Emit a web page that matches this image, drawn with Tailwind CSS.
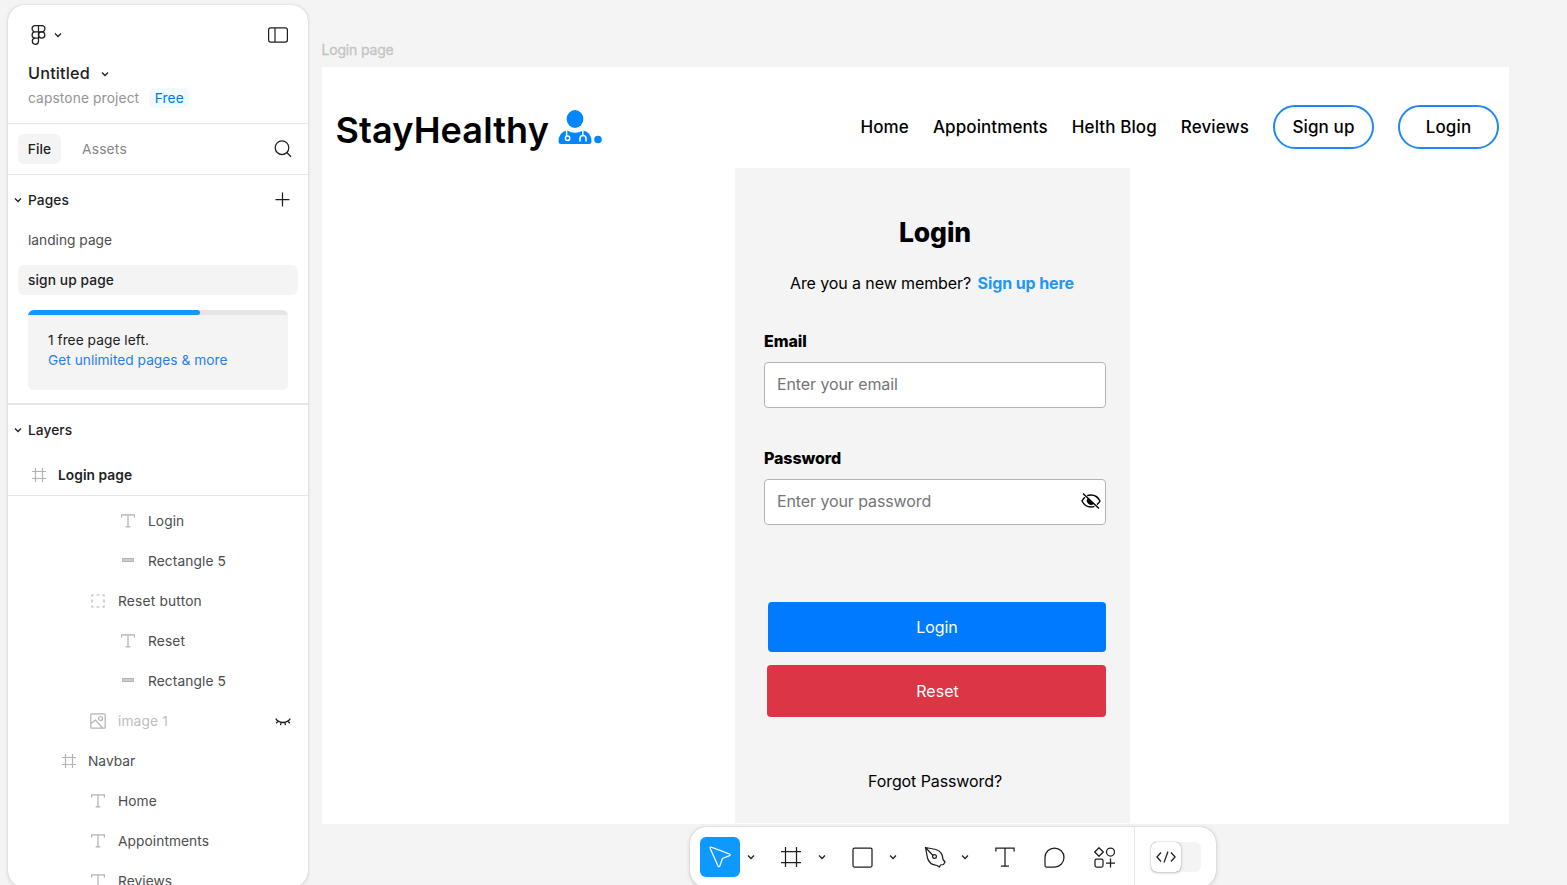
<!DOCTYPE html>
<html lang="en">
<head>
<meta charset="utf-8">
<title>Untitled</title>
<script src="https://cdn.jsdelivr.net/npm/@tailwindcss/browser@4"></script>
</head>
<body class="relative h-[885px] w-[1567px] overflow-hidden bg-[#f4f4f4] font-['Inter',sans-serif] text-[#1e1e1e]">
<svg class="hidden">
  <defs>
    <symbol id="chev" viewBox="0 0 10 10"><path d="M2 3.5 5 6.5 8 3.5" fill="none" stroke="currentColor" stroke-width="1.25"/></symbol>
    <symbol id="hash" viewBox="0 0 14 14"><path d="M3.5 0v14M10.5 0v14M0 3.5h14M0 10.5h14" fill="none" stroke="currentColor" stroke-width="1.2"/></symbol>
    <symbol id="tee" viewBox="0 0 14 14"><path d="M.6 3.4V.9h12.8v2.5M7 .9v12M4.6 12.9h4.8" fill="none" stroke="currentColor" stroke-width="1.2"/></symbol>
  </defs>
</svg>

<!-- Canvas -->
<p class="absolute left-[321.5px] top-[40px] text-[14px] leading-5 tracking-[-0.18px] text-[#c3c3c3] [-webkit-text-stroke:0.3px_#c3c3c3]">Login page</p>
<main class="absolute left-[321.5px] top-[67px] h-[757px] w-[1187.5px] bg-white">
  <header class="flex h-[101px] pl-[14px]">
    <div class="flex pt-[36px]">
      <span class="mt-[4px] w-[215px] whitespace-nowrap text-[36px] font-semibold leading-[46px] tracking-[0.12px] text-black">StayHealthy</span>
      <svg class="mt-[7px] ml-[7.5px] h-[36px] w-[45px]" viewBox="0 0 45 36" fill="#0087ff">
        <ellipse cx="17" cy="9" rx="8.4" ry="9"/>
        <path d="M9 20.5Q17 25 25 20.5 33.5 22 33.5 32 33.5 34 31 34H3Q.5 34 .5 32 .5 22 9 20.5Z"/>
        <circle cx="40" cy="29.5" r="3.8"/>
        <g fill="none" stroke="#fff" stroke-width="1.5"><path d="M8.6 20v6"/><circle cx="9.6" cy="28.3" r="2.2"/><path d="M24.8 20v5M22 31.5v-3q0-3 3-3t3 3v3"/></g>
      </svg>
    </div>
    <nav class="ml-auto mr-[10px] mt-[37.5px] flex h-11 items-center text-[17px] font-medium tracking-[0.1px] text-black">
      <div class="flex gap-6 pt-[2px]"><span>Home</span><span>Appointments</span><span>Helth Blog</span><span>Reviews</span></div>
      <span class="ml-6 flex h-11 w-[101px] items-center justify-center rounded-full border-2 border-[#1e88f7] pt-[2px]">Sign up</span>
      <span class="ml-6 flex h-11 w-[101px] items-center justify-center rounded-full border-2 border-[#1e88f7] pt-[2px]">Login</span>
    </nav>
  </header>
  <section class="ml-[413.5px] flex h-[655px] w-[395px] flex-col bg-[#f4f4f4] pl-[29px] pr-[24px] text-[16px] tracking-[-0.1px] text-black">
    <h1 class="mt-[48px] text-center text-[26.5px] font-extrabold leading-8">Login</h1>
    <p class="mt-[23px] flex pl-[26px] leading-6"><span>Are you a new member?</span><a class="ml-[6.5px] font-bold text-[#1e97fb]">Sign up here</a></p>
    <label class="mt-[34px] font-extrabold leading-6">Email</label>
    <div class="mt-[9px] flex h-[46px] items-center rounded-[4px] border border-[#b3b3b3] bg-white pb-[2px] pl-3 text-[#757575]">Enter your email</div>
    <label class="mt-[38px] font-extrabold leading-6">Password</label>
    <div class="mt-[9px] flex h-[46px] items-center rounded-[4px] border border-[#b3b3b3] bg-white pl-3 pr-1 text-[#757575]"><span class="pb-[2px]">Enter your password</span>
      <svg class="mb-[2px] ml-auto h-5 w-5" viewBox="0 0 20 20" fill="none" stroke="#000" stroke-width="1.4"><path d="M6.2 4.6Q8 4 10 4q6 0 9 6-1 2-3 3.6M13.4 15.4Q12 16 10 16 4 16 1 10q1-2.2 3-3.8M2 2.5 18 17.5"/><path d="M7 7a4 4 0 1 0 6 5.5Z" fill="#000" stroke="none"/></svg>
    </div>
    <div class="ml-[4px] mt-[77px] flex h-[50px] items-center justify-center rounded-[4px] bg-[#007bff] text-white">Login</div>
    <div class="ml-[3px] mt-[13px] flex h-[52px] items-center justify-center rounded-[4px] bg-[#dc3545] pl-[2px] tracking-normal text-white">Reset</div>
    <p class="mt-[52px] text-center leading-6">Forgot Password?</p>
  </section>
</main>

<!-- Left panel -->
<aside class="absolute left-2 top-[5px] flex h-[882px] w-[300px] flex-col overflow-hidden rounded-[16px] bg-white text-[13.75px] leading-5 tracking-[0.06px] shadow-[0_0_1px_rgba(0,0,0,.25),0_1px_4px_rgba(0,0,0,.12)] *:shrink-0">
  <div class="h-[119px] border-b border-[#e6e6e6] px-5">
    <div class="mt-[15px] flex h-[30px] items-center">
      <svg class="ml-[3px] h-5 w-[15px]" viewBox="0 0 15 20" fill="none" stroke="currentColor" stroke-width="1.25"><path d="M7.5.7h-3.3a3.05 3.05 0 0 0 0 6.2h3.3zM7.5.7h3.3a3.05 3.05 0 0 1 0 6.2h-3.3M7.5 6.9h-3.3a3.05 3.05 0 0 0 0 6.2h3.3zM7.5 13.1h-3.3a3.1 3.1 0 1 0 3.3 3.1z"/><circle cx="10.7" cy="10" r="3.1"/></svg>
      <svg class="ml-[7px] h-[10px] w-[10px]"><use href="#chev"/></svg>
      <svg class="ml-auto h-4 w-5" viewBox="0 0 20 16" fill="none" stroke="currentColor" stroke-width="1.2"><rect x=".6" y=".9" width="18.8" height="14.2" rx="2"/><path d="M7 1v14"/></svg>
    </div>
    <div class="mt-[13px] flex h-[20px] items-center text-[16.25px] font-medium tracking-[0.17px]"><span>Untitled</span><svg class="ml-[10px] mt-[2px] h-[10px] w-[10px]"><use href="#chev"/></svg></div>
    <div class="mt-[5px] flex items-center text-[#949494]"><span class="tracking-[0.12px]">capstone project</span><span class="ml-[10px] flex h-5 w-10 items-center justify-center rounded-[5px] bg-[#f2f9ff] text-[#007be5]">Free</span></div>
  </div>
  <div class="flex h-[51px] items-center border-b border-[#e6e6e6] px-[10px]">
    <span class="flex h-[30px] w-[43px] items-center justify-center rounded-[6px] bg-[#f4f4f4] font-medium tracking-[0.15px]">File</span>
    <span class="ml-[21px] tracking-[0.2px] text-[#848484]">Assets</span>
    <svg class="mb-px ml-auto mr-[6.5px] h-[18px] w-[18px]" viewBox="0 0 18 18" fill="none" stroke="currentColor" stroke-width="1.25"><circle cx="8" cy="7.7" r="6.8"/><path d="M12.8 12.5 17 16.7"/></svg>
  </div>
  <div class="mt-[5px] flex h-10 items-center pl-[5px] pr-[18px] font-medium"><svg class="h-[10px] w-[10px]"><use href="#chev"/></svg><span class="ml-[5px]">Pages</span>
    <svg class="mb-px ml-auto h-[15px] w-[15px]" viewBox="0 0 15 15" stroke="currentColor" stroke-width="1.25"><path d="M7.5.5v14M.5 7.5h14"/></svg></div>
  <div class="flex h-10 items-center pl-5 tracking-normal text-[#4c4c4c]">landing page</div>
  <div class="mx-[10px] mt-[5px] flex h-[30px] items-center rounded-[6px] bg-[#f4f4f4] pl-[10px] font-medium tracking-[0.1px]">sign up page</div>
  <div class="mx-5 mt-[15px] h-20 overflow-hidden rounded-[6px] bg-[#f4f4f4] tracking-[0.03px]">
    <div class="h-[5px] bg-[#e5e5e5]"><div class="h-[5px] w-[172px] rounded-r-[3px] bg-[#0d99ff]"></div></div>
    <p class="mt-[15px] pl-5">1 free page left.</p>
    <p class="pl-5 tracking-normal text-[#2b7de9]">Get unlimited pages &amp; more</p>
  </div>
  <div class="mt-[13px] h-[2px] bg-[#e6e6e6]"></div>
  <div class="mt-[5px] flex h-10 items-center pl-[5px] font-medium"><svg class="h-[10px] w-[10px]"><use href="#chev"/></svg><span class="ml-[5px]">Layers</span></div>
  <div class="flex h-[46px] items-center border-b border-[#e6e6e6] pl-[23.5px] pt-[5px] font-semibold"><svg class="h-[14px] w-[14px] text-[#b3b3b3]"><use href="#hash"/></svg><span class="ml-[12.5px]">Login page</span></div>
  <div class="mt-[5px] flex flex-col text-[#4c4c4c] *:flex *:h-10 *:shrink-0 *:items-center [&_svg]:text-[#b3b3b3]">
    <div class="pl-[113px]"><svg class="mb-px h-[14px] w-[14px]"><use href="#tee"/></svg><span class="ml-[13px]">Login</span></div>
    <div class="pl-[114px]"><svg class="mb-[2px] h-1 w-3" viewBox="0 0 12 4"><rect x=".5" y=".5" width="11" height="3" fill="#ccc" stroke="currentColor"/></svg><span class="ml-[14px] tracking-[0.1px]">Rectangle 5</span></div>
    <div class="pl-[83px]"><svg class="mb-px h-[14px] w-[14px]" viewBox="0 0 14 14" fill="none" stroke="currentColor" stroke-width="1.2"><path d="M1 2.5V1h1.5M5.5 1h3M11.5 1H13v1.5M13 5.5v3M13 11.5V13h-1.5M8.5 13h-3M2.5 13H1v-1.5M1 8.5v-3"/></svg><span class="ml-[13px] tracking-[0.18px]">Reset button</span></div>
    <div class="pl-[113px]"><svg class="mb-px h-[14px] w-[14px]"><use href="#tee"/></svg><span class="ml-[13px] tracking-[0.15px]">Reset</span></div>
    <div class="pl-[114px]"><svg class="mb-[2px] h-1 w-3" viewBox="0 0 12 4"><rect x=".5" y=".5" width="11" height="3" fill="#ccc" stroke="currentColor"/></svg><span class="ml-[14px] tracking-[0.1px]">Rectangle 5</span></div>
    <div class="pl-[82px]"><svg class="h-4 w-4" viewBox="0 0 16 16" fill="none" stroke="currentColor" stroke-width="1.2"><rect x=".8" y=".8" width="14.4" height="14.4" rx="1"/><circle cx="10.5" cy="5.5" r="2"/><path d="M1 10.5 5.5 7l7 8"/></svg><span class="ml-[12px] tracking-[0.12px] text-[#bdbdbd]">image 1</span>
      <svg class="ml-auto mr-[17px] mt-px h-[8px] w-4" viewBox="0 0 16 8" fill="none" stroke="#1e1e1e" stroke-width="1.3"><path d="M.7.7Q3 4.5 8 4.5T15.3.7M3 3.2 1.2 5.2M6.2 4.4 5.500 7.2M9.8 4.4l.7 2.8M13 3.2l1.8 2"/></svg></div>
    <div class="pl-[53.5px]"><svg class="mb-px h-[14px] w-[14px]"><use href="#hash"/></svg><span class="ml-[12.5px] tracking-normal">Navbar</span></div>
    <div class="pl-[83px]"><svg class="mb-px h-[14px] w-[14px]"><use href="#tee"/></svg><span class="ml-[13px]">Home</span></div>
    <div class="pl-[83px]"><svg class="mb-px h-[14px] w-[14px]"><use href="#tee"/></svg><span class="ml-[13px]">Appointments</span></div>
    <div class="pl-[83px]"><svg class="mb-px h-[14px] w-[14px]"><use href="#tee"/></svg><span class="ml-[13px]">Reviews</span></div>
  </div>
</aside>

<!-- Toolbar -->
<footer class="absolute left-[690px] top-[827px] flex h-[60px] w-[526px] items-center rounded-[16px] bg-white pl-[10px] shadow-[0_0_1px_rgba(0,0,0,.3),0_1px_5px_rgba(0,0,0,.15)]">
  <span class="flex h-10 w-10 items-center justify-center rounded-[6px] bg-[#0d99ff]"><svg class="h-[22px] w-[22px]" viewBox="0 0 22 22" fill="none" stroke="#fff" stroke-width="1.3" stroke-linejoin="round"><path d="M1.200 2.500Q.7.800 2.300 1.200L20.500 8q1.300.8 0 1.700L13.500 12.500 10.800 20q-.8 1.600-1.800 0Z"/></svg></span>
  <svg class="ml-[5.5px] h-[10px] w-[10px]"><use href="#chev"/></svg>
  <svg class="ml-[25.5px] h-5 w-5" viewBox="0 0 20 20" stroke="currentColor" stroke-width="1.25"><path d="M4.5 0v20M15.5 0v20M0 4.5h20M0 15.5h20"/></svg>
  <svg class="ml-[15.5px] h-[10px] w-[10px]"><use href="#chev"/></svg>
  <svg class="ml-[25px] h-[21px] w-[21px]" viewBox="0 0 21 21" fill="none" stroke="currentColor" stroke-width="1.25"><rect x="1" y="1" width="19" height="19" rx="1.5"/></svg>
  <svg class="ml-[15.5px] h-[10px] w-[10px]"><use href="#chev"/></svg>
  <svg class="ml-[25.5px] h-[22px] w-[22px]" viewBox="0 0 22 22" fill="none" stroke="currentColor" stroke-width="1.25" stroke-linejoin="round"><path d="M1.5 1.5 12 3.5q6.500 2 7 10l2 2.500-1.500 2.500-3 .500-1 2-2.500-1.500Q5 18.500 3.500 12ZM1.500 1.500l7.500 8"/><circle cx="10.500" cy="10.500" r="1.900"/></svg>
  <svg class="ml-[14px] h-[10px] w-[10px]"><use href="#chev"/></svg>
  <svg class="ml-[25px] h-5 w-5" viewBox="0 0 20 20" fill="none" stroke="currentColor" stroke-width="1.25"><path d="M.9 4.5V1h18.200v3.500M10 1v18M6 19h8"/></svg>
  <svg class="ml-[29.5px] h-[21px] w-[21px]" viewBox="0 0 21 21" fill="none" stroke="currentColor" stroke-width="1.25"><path d="M10.5 1a9.500 9.500 0 1 1 0 19H2.500Q1 20 1 18.500v-8A9.500 9.500 0 0 1 10.500 1Z"/></svg>
  <svg class="ml-[29px] h-[21px] w-[21px]" viewBox="0 0 21 21" fill="none" stroke="currentColor" stroke-width="1.25" stroke-linejoin="round"><path d="M5 .7 9.300 5 5 9.300.700 5ZM16.500 11.500v9M12 16h9"/><circle cx="16.500" cy="5" r="4"/><rect x="1" y="12" width="8" height="8" rx="1.500"/></svg>
  <span class="ml-[19px] h-full w-px bg-[#e6e6e6]"></span>
  <span class="ml-[15.500px] flex h-[30px] w-[50px] rounded-[6px] bg-[#f4f4f4]"><span class="flex h-[30px] w-[30px] items-center justify-center rounded-[6px] bg-white shadow-[0_0_1px_rgba(0,0,0,.5),0_1px_3px_rgba(0,0,0,.2)]"><svg class="h-3 w-5" viewBox="0 0 20 12" fill="none" stroke="currentColor" stroke-width="1.25"><path d="M5 1.500.9 6 5 10.500M15 1.500 19.100 6 15 10.500M12 .500 8 11.500"/></svg></span></span>
</footer>
</body>
</html>
